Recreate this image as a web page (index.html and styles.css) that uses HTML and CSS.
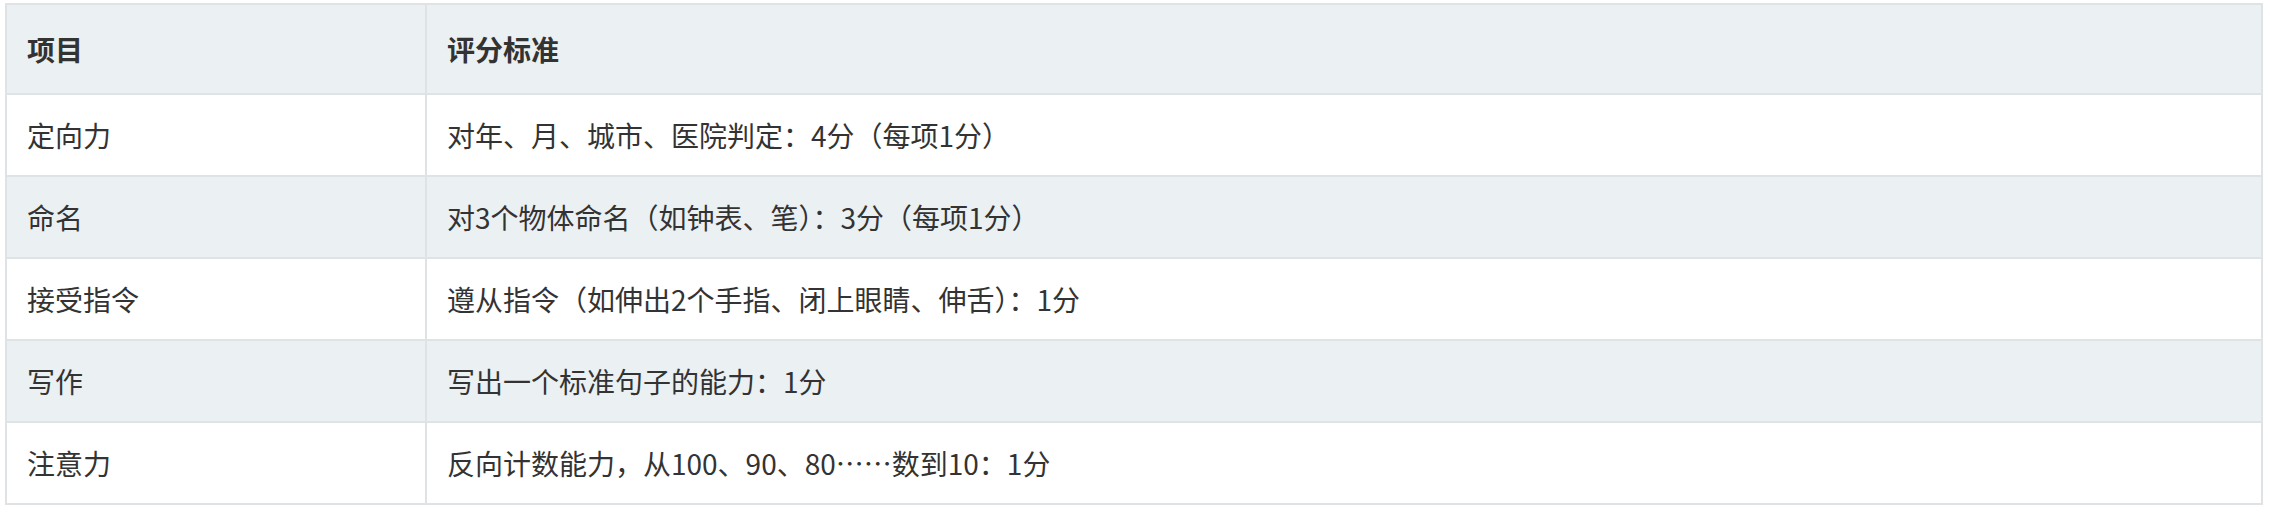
FILE: index.html
```html
<!DOCTYPE html>
<html lang="zh-CN">
<head>
<meta charset="utf-8">
<title>评分标准</title>
<link rel="stylesheet" href="styles.css">
</head>
<body>
<table class="score-table">
  <thead>
    <tr>
      <th class="col-item">项目</th>
      <th>评分标准</th>
    </tr>
  </thead>
  <tbody>
    <tr>
      <td>定向力</td>
      <td>对年、月、城市、医院判定：4分（每项1分）</td>
    </tr>
    <tr>
      <td>命名</td>
      <td>对3个物体命名（如钟表、笔）：3分（每项1分）</td>
    </tr>
    <tr>
      <td>接受指令</td>
      <td>遵从指令（如伸出2个手指、闭上眼睛、伸舌）：1分</td>
    </tr>
    <tr>
      <td>写作</td>
      <td>写出一个标准句子的能力：1分</td>
    </tr>
    <tr>
      <td>注意力</td>
      <td>反向计数能力，从100、90、80……数到10：1分</td>
    </tr>
  </tbody>
</table>
</body>
</html>
```

FILE: styles.css
```css
html, body {
  background: #ffffff;
}
body {
  margin: 3px 7px 0 5px;
  font-family: "Noto Sans CJK SC", "Noto Sans", sans-serif;
  color: #333333;
}
.score-table {
  width: 100%;
  border-collapse: collapse;
  border: 2px solid #dfe3e6;
  font-size: 28px;
  line-height: 42px;
}
.score-table th,
.score-table td {
  border: 2px solid #dfe3e6;
  text-align: left;
  padding: 19px 20px;
  vertical-align: middle;
}
.score-table th {
  font-weight: 700;
  padding-top: 23px;
  padding-bottom: 23px;
  background: #ebf0f3;
}
.score-table .col-item {
  width: 378px;
}
.score-table tbody tr:nth-child(even) td {
  background: #ebf0f3;
}
.score-table tbody tr:nth-child(odd) td {
  background: #ffffff;
}
```
